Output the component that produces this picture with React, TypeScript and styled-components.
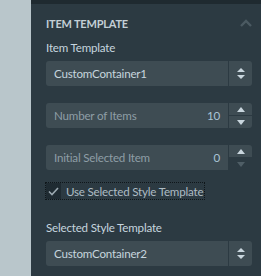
import styled, { createGlobalStyle } from "styled-components";

const Global = createGlobalStyle`
  html, body { margin: 0; padding: 0; background: #2c3a42; }
  body { font-family: Lato, "Noto Sans", sans-serif; }
`;

const Page = styled.div`
  display: flex;
  width: 261px;
  height: 276px;
  overflow: hidden;
`;

const Strip = styled.div`
  width: 31px;
  background: #b9c6cb;
`;

const Panel = styled.div`
  flex: 1;
  background: #2c3a42;
  border-top: 4px solid #1f2a30;
  padding: 8px 9px 0 15px;
  display: flex;
  flex-direction: column;
  letter-spacing: -0.2px;
`;

const Header = styled.div`
  display: flex;
  align-items: center;
  justify-content: space-between;
  height: 22px;
  font-size: 11px;
  font-weight: 700;
  color: #c3cfd6;
`;

const Label = styled.div<{ $mt?: number }>`
  font-size: 11.6px;
  color: #c6d5df;
  margin-top: ${(p) => p.$mt ?? 4}px;
  height: 20px;
  line-height: 20px;
`;

const Row = styled.div<{ $mt?: number }>`
  display: flex;
  height: 25px;
  margin-top: ${(p) => p.$mt ?? 0}px;
  gap: 1px;
`;

const Field = styled.div<{ $muted?: boolean }>`
  flex: 1;
  display: flex;
  align-items: center;
  justify-content: space-between;
  background: #3e4c53;
  border-radius: 3px 0 0 3px;
  padding: 0 8px 0 8px;
  font-size: 11.6px;
  color: ${(p) => (p.$muted ? "#8e9ea6" : "#c6d5de")};
`;

const Value = styled.span`
  color: #a9c4d6;
`;

const Toggle = styled.div`
  width: 23px;
  background: #3e4c53;
  border-radius: 0 3px 3px 0;
  display: flex;
  align-items: center;
  justify-content: center;
`;

const Spin = styled.div`
  width: 23px;
  display: flex;
  flex-direction: column;
  gap: 1px;
`;

const SpinBtn = styled.div<{ $top?: boolean; $off?: boolean }>`
  flex: 1;
  display: flex;
  align-items: center;
  justify-content: center;
  background: ${(p) => (p.$off ? "transparent" : "#3e4c53")};
  border-radius: ${(p) => (p.$top ? "0 3px 0 0" : "0 0 3px 0")};
  color: ${(p) => (p.$off ? "#4f5e66" : "#c9d6de")};
`;

const Check = styled.label`
  display: flex;
  align-items: center;
  align-self: flex-start;
  gap: 5px;
  margin-top: 13px;
  height: 16px;
  outline: 1px dotted #0f161a;
  font-size: 11.6px;
  color: #aebcc4;
  padding-right: 1px;
`;

const Box = styled.span`
  width: 15px;
  height: 16px;
  background: #1f2b32;
  display: flex;
  align-items: center;
  justify-content: center;
`;

const Tri = ({ up }: { up?: boolean }) => (
  <svg width="8" height="5" viewBox="0 0 8 5">
    <path d={up ? "M4 0 L8 5 L0 5 Z" : "M0 0 L8 0 L4 5 Z"} fill="currentColor" />
  </svg>
);

const UpDown = () => (
  <svg width="8" height="11" viewBox="0 0 8 11" style={{ color: "#c9d6de" }}>
    <path d="M4 0 L8 4 L0 4 Z M0 7 L8 7 L4 11 Z" fill="currentColor" />
  </svg>
);

export default function App() {
  return (
    <Page>
      <Global />
      <Strip />
      <Panel>
        <Header>
          ITEM TEMPLATE
          <svg width="12" height="8" viewBox="0 0 12 8">
            <path d="M1 7 L6 2 L11 7" stroke="#4b5a62" strokeWidth="2.4" fill="none" />
          </svg>
        </Header>
        <Label>Item Template</Label>
        <Row $mt={3}>
          <Field>CustomContainer1</Field>
          <Toggle>
            <UpDown />
          </Toggle>
        </Row>
        <Row $mt={17}>
          <Field $muted>
            Number of Items<Value>10</Value>
          </Field>
          <Spin>
            <SpinBtn $top>
              <Tri up />
            </SpinBtn>
            <SpinBtn>
              <Tri />
            </SpinBtn>
          </Spin>
        </Row>
        <Row $mt={17}>
          <Field $muted>
            Initial Selected Item<Value>0</Value>
          </Field>
          <Spin>
            <SpinBtn $top>
              <Tri up />
            </SpinBtn>
            <SpinBtn $off>
              <Tri />
            </SpinBtn>
          </Spin>
        </Row>
        <Check>
          <Box>
            <svg width="11" height="9" viewBox="0 0 11 9">
              <path d="M1 4.5 L4 7.5 L10 1" stroke="#9aa8b0" strokeWidth="1.6" fill="none" />
            </svg>
          </Box>
          Use Selected Style Template
        </Check>
        <Label $mt={19}>Selected Style Template</Label>
        <Row $mt={3}>
          <Field>CustomContainer2</Field>
          <Toggle>
            <UpDown />
          </Toggle>
        </Row>
      </Panel>
    </Page>
  );
}
